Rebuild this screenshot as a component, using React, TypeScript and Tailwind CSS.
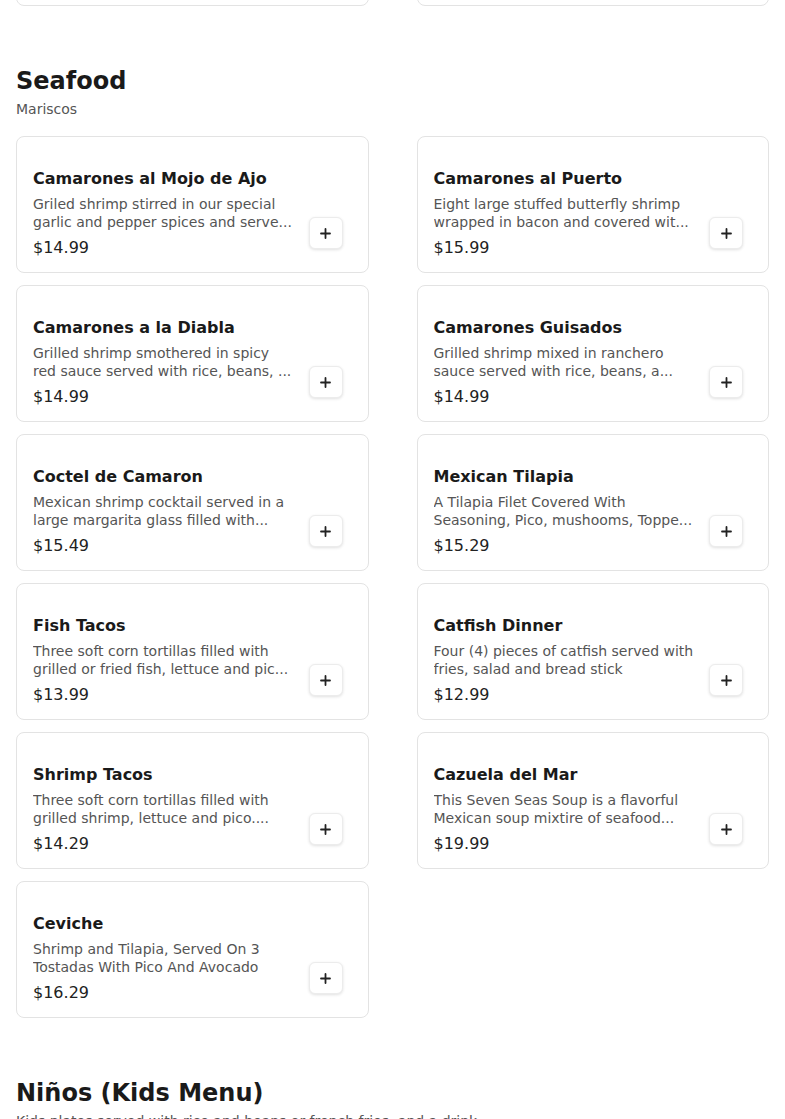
import React from "react";

interface Dish {
  name: string;
  description: string;
  price: string;
}

// descriptions are shown as trimmed by the menu (two lines max)
const seafood: Dish[] = [
  {
    name: "Camarones al Mojo de Ajo",
    description: "Griled shrimp stirred in our special garlic and pepper spices and serve...",
    price: "$14.99",
  },
  {
    name: "Camarones al Puerto",
    description: "Eight large stuffed butterfly shrimp wrapped in bacon and covered wit...",
    price: "$15.99",
  },
  {
    name: "Camarones a la Diabla",
    description: "Grilled shrimp smothered in spicy red sauce served with rice, beans, ...",
    price: "$14.99",
  },
  {
    name: "Camarones Guisados",
    description: "Grilled shrimp mixed in ranchero sauce served with rice, beans, a...",
    price: "$14.99",
  },
  {
    name: "Coctel de Camaron",
    description: "Mexican shrimp cocktail served in a large margarita glass filled with...",
    price: "$15.49",
  },
  {
    name: "Mexican Tilapia",
    description: "A Tilapia Filet Covered With Seasoning, Pico, mushooms, Toppe...",
    price: "$15.29",
  },
  {
    name: "Fish Tacos",
    description: "Three soft corn tortillas filled with grilled or fried fish, lettuce and pic...",
    price: "$13.99",
  },
  {
    name: "Catfish Dinner",
    description: "Four (4) pieces of catfish served with fries, salad and bread stick",
    price: "$12.99",
  },
  {
    name: "Shrimp Tacos",
    description: "Three soft corn tortillas filled with grilled shrimp, lettuce and pico....",
    price: "$14.29",
  },
  {
    name: "Cazuela del Mar",
    description: "This Seven Seas Soup is a flavorful Mexican soup mixtire of seafood...",
    price: "$19.99",
  },
  {
    name: "Ceviche",
    description: "Shrimp and Tilapia, Served On 3 Tostadas With Pico And Avocado",
    price: "$16.29",
  },
];

function PlusIcon() {
  return (
    <svg width="11" height="11" viewBox="0 0 11 11" fill="none">
      <path d="M5.5 1v9M1 5.5h9" stroke="#222" strokeWidth="1.8" strokeLinecap="round" />
    </svg>
  );
}

function DishCard({ dish }: { dish?: Dish }) {
  return (
    <div className="h-[137px] rounded-lg border border-[#e3e3e3] bg-white pl-4 pr-[25px] pt-[30px]">
      {dish && (
        <div className="flex items-start">
          <div className="w-[262px] min-w-0">
            <h3 className="text-base leading-6 font-bold text-[#1a1a1a]">{dish.name}</h3>
            <p className="mt-[5px] line-clamp-2 text-sm leading-[17.5px] text-[#555]">
              {dish.description}
            </p>
            <p className="mt-[5px] text-base leading-6 text-[#222]">{dish.price}</p>
          </div>
          <button className="mt-[50px] ml-auto flex h-8 w-[34px] shrink-0 items-center justify-center rounded-md border border-[#ececec] bg-white shadow-[0_1px_3px_rgba(0,0,0,0.12)]">
            <PlusIcon />
          </button>
        </div>
      )}
    </div>
  );
}

export default function App() {
  return (
    <div className="min-h-screen overflow-hidden bg-white px-4 font-['DejaVu_Sans',sans-serif]">
      {/* tail of the previous section */}
      <div className="-mt-[131px] grid grid-cols-2 gap-x-12">
        <DishCard />
        <DishCard />
      </div>

      <section className="mt-[59px]">
        <h2 className="text-2xl leading-8 font-bold text-[#1a1a1a]">Seafood</h2>
        <p className="mt-[2px] text-sm leading-5 text-[#555]">Mariscos</p>
        <div className="mt-[17px] grid grid-cols-2 gap-x-12 gap-y-3">
          {seafood.map((d) => (
            <DishCard key={d.name} dish={d} />
          ))}
        </div>
      </section>

      <section className="mt-[59px]">
        <h2 className="text-2xl leading-8 font-bold text-[#1a1a1a]">Niños (Kids Menu)</h2>
        <p className="mt-[2px] text-sm leading-5 text-[#555]">
          Kids plates served with rice and beans or french fries, and a drink
        </p>
      </section>
    </div>
  );
}
